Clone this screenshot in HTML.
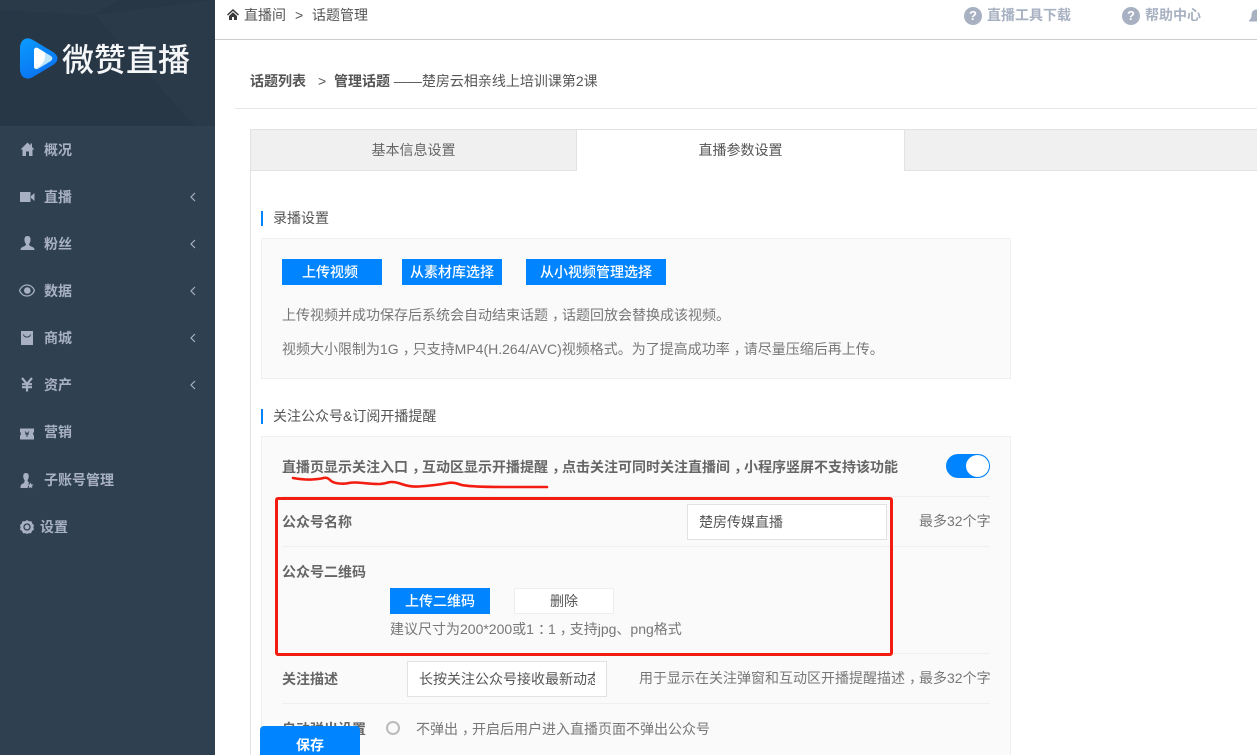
<!DOCTYPE html>
<html lang="zh">
<head>
<meta charset="utf-8">
<title>话题管理</title>
<style>
html,body{margin:0;padding:0;width:1257px;height:755px;overflow:hidden;background:#fff}
body{position:relative;font-family:"Liberation Sans","Noto Sans CJK SC",sans-serif;font-size:14px;color:#777}
.a,.t{position:absolute;box-sizing:border-box}
.t{white-space:nowrap;line-height:20px;height:20px}
.b{font-weight:700}
.nav{color:#a7b1c2;font-weight:700;left:44px}
.chev{position:absolute;left:190px}
.ico{position:absolute}
.btn{position:absolute;box-sizing:border-box;background:#0084ff;color:#fff;text-align:center;height:26px;line-height:26px;font-weight:500}
.line{position:absolute;left:282px;width:708px;height:1px;background:#f0f0f0}
.input{position:absolute;box-sizing:border-box;width:200px;height:36px;background:#fff;border:1px solid #e2e2e2;line-height:34px;padding-left:11px;color:#555;overflow:hidden;white-space:nowrap}
.c{position:relative;left:4px}
</style>
</head>
<body>
<!-- sidebar -->
<div class="a" style="left:0;top:0;width:215px;height:755px;background:#2f4050"></div>
<svg class="ico" style="left:0;top:0" width="215" height="126" viewBox="0 0 215 126">
<rect width="215" height="126" fill="#283746"/>
<polygon points="95,15 215,0 215,126 195,126" fill="#2a3a49"/>
<polygon points="0,0 120,0 92,15 0,10" fill="#2a3a49"/>
</svg>
<svg class="ico" style="left:20px;top:38px" width="38" height="41" viewBox="0 0 38 41">
<defs><linearGradient id="g" x1="0" y1="0" x2="0.5" y2="1"><stop offset="0" stop-color="#0a9cff"/><stop offset="1" stop-color="#0a72f0"/></linearGradient></defs>
<path d="M0 10C0 2 6-2 13 2L33 14C39 18 39 23 33 27L13 39C6 43 0 39 0 31Z" fill="url(#g)"/>
<path d="M14 12.5C14 10 16 9 18.500 10.500L30.500 17.800C33 19.300 33 21.700 30.500 23.200L18.500 30.500C16 32 14 31 14 28.500Z" fill="#bfe5fb"/>
<path d="M14 12.500C14 10 16 9 18.500 10.500L24.500 14.200C26.500 20 23.500 27 15.500 30.500C14.500 30 14 29.500 14 28.500Z" fill="#fff"/>
</svg>
<div class="t" style="left:62px;top:40px;height:40px;line-height:40px;font-size:32px;color:#f4f6f8;font-weight:500">微赞直播</div>

<svg class="ico" style="left:20px;top:142px" width="15" height="15" viewBox="0 0 15 15"><path d="M7.5 0.500L0.500 7.500H2.500V14H6V9.500H9V14H12.500V7.500H14.500L12 5V1.500H10.500V3.500Z" fill="#a7b1c2"/></svg>
<div class="t nav" style="top:140px">概况</div>
<svg class="ico" style="left:20px;top:191px" width="15" height="12" viewBox="0 0 15 12"><path d="M0 1H10.500V11H0ZM11 5L14.500 2V10L11 7Z" fill="#a7b1c2"/></svg>
<div class="t nav" style="top:187px">直播</div>
<svg class="ico" style="left:20px;top:236px" width="15" height="15" viewBox="0 0 15 15"><path d="M7.500 0C10 0 10.800 2 10.500 4.500C10.300 6.300 9.500 7.500 9 8.200C9 9.600 10.500 10 12.500 11C14 11.700 14.500 12.500 14.500 14H0.500C0.500 12.500 1 11.700 2.500 11C4.500 10 6 9.600 6 8.200C5.500 7.500 4.700 6.300 4.500 4.500C4.200 2 5 0 7.500 0Z" fill="#a7b1c2"/></svg>
<div class="t nav" style="top:234px">粉丝</div>
<svg class="ico" style="left:19px;top:284px" width="16" height="13" viewBox="0 0 16 13"><path d="M8 1C12 1 14.500 4 15.500 6.500C14.500 9 12 12 8 12C4 12 1.500 9 0.500 6.500C1.500 4 4 1 8 1Z" fill="none" stroke="#a7b1c2" stroke-width="1.300"/><circle cx="8.300" cy="6.500" r="3.300" fill="#a7b1c2"/></svg>
<div class="t nav" style="top:281px">数据</div>
<svg class="ico" style="left:21px;top:331px" width="12" height="14" viewBox="0 0 12 14"><path d="M0 0H12V14H0Z" fill="#a7b1c2"/><path d="M2.500 3.500C3 7 9 7 9.500 3.500" fill="none" stroke="#2f4050" stroke-width="1"/></svg>
<div class="t nav" style="top:328px">商城</div>
<svg class="ico" style="left:21px;top:377px" width="12" height="15" viewBox="0 0 12 15"><path d="M1 1L6 7L11 1M1 7.200H11M1 10.200H11M6 7V14.500" fill="none" stroke="#a7b1c2" stroke-width="2.200"/></svg>
<div class="t nav" style="top:375px">资产</div>
<svg class="ico" style="left:20px;top:428px" width="14" height="12" viewBox="0 0 14 12"><path d="M0 0.500H14V4C12.800 4.300 12.800 7.200 14 7.500V11.500H0V7.500C1.200 7.200 1.200 4.300 0 4Z" fill="#a7b1c2"/><path d="M5 3.500L7 6L9 3.500M5 6H9M7 6V9" fill="none" stroke="#2f4050" stroke-width="1"/></svg>
<div class="t nav" style="top:422px">营销</div>
<svg class="ico" style="left:20px;top:473px" width="14" height="16" viewBox="0 0 14 16"><path d="M6 0C8.200 0 9 1.800 8.700 4C8.500 5.500 8 6.500 7.500 7.200C7.500 8.300 8 8.800 9 9.300L7.500 15H0.500C0.500 12.500 1 11.500 2.500 10.800C4 10 4.800 9 4.600 7.200C4 6.500 3.500 5.500 3.300 4C3 1.800 3.800 0 6 0Z" fill="#a7b1c2"/><path d="M10.500 9.500L11.400 11.400L13.500 11.700L12 13.100L12.400 15.200L10.500 14.200L8.600 15.200L9 13.100L7.500 11.700L9.600 11.400Z" fill="#a7b1c2"/></svg>
<div class="t nav" style="top:470px">子账号管理</div>
<svg class="ico" style="left:20px;top:520px" width="14" height="14" viewBox="0 0 14 14"><path d="M7 0L9 1.200L11.500 1.200L12.300 3.500L14 5.200L13.400 7.500L14 9.500L12 11L11 13.200L8.700 13.200L7 14L5.200 13.200L3 13.200L2 11L0 9.500L0.600 7.500L0 5.200L1.700 3.500L2.500 1.200L5 1.200Z" fill="#a7b1c2"/><circle cx="7" cy="7" r="3" fill="none" stroke="#2f4050" stroke-width="1.300"/></svg>
<div class="t nav" style="top:517px;left:40px">设置</div>

<svg class="chev" style="top:192px" width="6" height="10" viewBox="0 0 6 10"><path d="M5 1L1 5L5 9" fill="none" stroke="#a7b1c2" stroke-width="1.200"/></svg>
<svg class="chev" style="top:239px" width="6" height="10" viewBox="0 0 6 10"><path d="M5 1L1 5L5 9" fill="none" stroke="#a7b1c2" stroke-width="1.200"/></svg>
<svg class="chev" style="top:286px" width="6" height="10" viewBox="0 0 6 10"><path d="M5 1L1 5L5 9" fill="none" stroke="#a7b1c2" stroke-width="1.200"/></svg>
<svg class="chev" style="top:333px" width="6" height="10" viewBox="0 0 6 10"><path d="M5 1L1 5L5 9" fill="none" stroke="#a7b1c2" stroke-width="1.200"/></svg>
<svg class="chev" style="top:380px" width="6" height="10" viewBox="0 0 6 10"><path d="M5 1L1 5L5 9" fill="none" stroke="#a7b1c2" stroke-width="1.200"/></svg>

<!-- top bar -->
<div class="a" style="left:215px;top:39px;width:1042px;height:1px;background:#ccc"></div>
<svg class="ico" style="left:227px;top:9px" width="12" height="11" viewBox="0 0 12 11"><path d="M6 0L0 5.500L1 6.500L6 2L11 6.500L12 5.500ZM2 7V11H5V8H7V11H10V7L6 3.200Z" fill="#3a3a3a"/></svg>
<div class="t" style="left:244px;top:5px;color:#555">直播间</div>
<div class="t" style="left:295px;top:5px;color:#555">&gt;</div>
<div class="t" style="left:312px;top:5px;color:#555">话题管理</div>
<div class="a" style="left:964px;top:7px;width:18px;height:18px;border-radius:50%;background:#a7b1c2;color:#fff;text-align:center;line-height:18px;font-size:13px;font-weight:700">?</div>
<div class="t b" style="left:987px;top:5px;color:#a7b1c2">直播工具下载</div>
<div class="a" style="left:1122px;top:7px;width:18px;height:18px;border-radius:50%;background:#a7b1c2;color:#fff;text-align:center;line-height:18px;font-size:13px;font-weight:700">?</div>
<div class="t b" style="left:1145px;top:5px;color:#a7b1c2">帮助中心</div>
<svg class="ico" style="left:1249px;top:9px" width="8" height="15" viewBox="0 0 8 15"><path d="M8 0.500C4 0.500 2.500 3 2.500 6.500C2.500 9 1.500 10 0 11.500V12.500H8Z" fill="#a7b1c2"/></svg>

<!-- breadcrumb -->
<div class="t b" style="left:250px;top:71px;color:#555">话题列表</div>
<div class="t" style="left:318px;top:71px;color:#555">&gt;</div>
<div class="t" style="left:334px;top:71px;color:#555"><span class="b">管理话题</span> ——楚房云相亲线上培训课第2课</div>
<div class="a" style="left:235px;top:108px;width:1022px;height:1px;background:#e7e7e7"></div>

<!-- tabs -->
<div class="a" style="left:250px;top:129px;width:1007px;height:1px;background:#e2e2e2"></div>
<div class="a" style="left:250px;top:130px;width:1px;height:625px;background:#e2e2e2"></div>
<div class="a" style="left:251px;top:130px;width:326px;height:41px;background:#f0f0f0;border-bottom:1px solid #e2e2e2;border-right:1px solid #e2e2e2;text-align:center;line-height:40px;color:#666">基本信息设置</div>
<div class="a" style="left:577px;top:130px;width:327px;height:41px;background:#fff;text-align:center;line-height:40px;color:#555">直播参数设置</div>
<div class="a" style="left:904px;top:130px;width:353px;height:41px;background:#f0f0f0;border-bottom:1px solid #e2e2e2;border-left:1px solid #e2e2e2"></div>

<!-- section 1 -->
<div class="a" style="left:261px;top:211px;width:2px;height:15px;background:#0084ff"></div>
<div class="t" style="left:273px;top:208px;color:#555">录播设置</div>
<div class="a" style="left:261px;top:238px;width:750px;height:141px;background:#fafafa;border:1px solid #f0f0f0"></div>
<div class="btn" style="left:282px;top:259px;width:100px;line-height:26px;padding-right:4px">上传视频</div>
<div class="btn" style="left:402px;top:259px;width:100px;line-height:27px">从素材库选择</div>
<div class="btn" style="left:526px;top:259px;width:140px;line-height:27px">从小视频管理选择</div>
<div class="t" style="left:282px;top:305px">上传视频并成功保存后系统会自动结束话题<span class="c">，</span>话题回放会替换成该视频。</div>
<div class="t" style="left:282px;top:339px">视频大小限制为1G<span class="c">，</span>只支持MP4(H.264/AVC)视频格式。为了提高成功率<span class="c">，</span>请尽量压缩后再上传。</div>

<!-- section 2 -->
<div class="a" style="left:261px;top:409px;width:2px;height:15px;background:#0084ff"></div>
<div class="t" style="left:273px;top:406px;color:#555">关注公众号&amp;订阅开播提醒</div>
<div class="a" style="left:261px;top:436px;width:750px;height:330px;background:#fafafa;border:1px solid #f0f0f0"></div>
<div class="t b" style="left:282px;top:457px;color:#666">直播页显示关注入口<span class="c">，</span>互动区显示开播提醒<span class="c">，</span>点击关注可同时关注直播间<span class="c">，</span>小程序竖屏不支持该功能</div>
<div class="a" style="left:946px;top:454px;width:44px;height:24px;border-radius:12px;background:#0084ff"></div>
<div class="a" style="left:966px;top:455px;width:23px;height:22px;border-radius:50%;background:#fff"></div>
<div class="line" style="top:496px"></div>
<div class="t b" style="left:282px;top:512px;color:#666">公众号名称</div>
<div class="input" style="left:687px;top:504px">楚房传媒直播</div>
<div class="t" style="left:919px;top:511px;width:71px;text-align:right">最多32个字</div>
<div class="line" style="top:546px"></div>
<div class="t b" style="left:282px;top:562px;color:#666">公众号二维码</div>
<div class="btn" style="left:390px;top:588px;width:100px;line-height:27px">上传二维码</div>
<div class="btn" style="left:514px;top:588px;width:100px;background:#fff;border:1px solid #eee;color:#555;line-height:25px;font-weight:400">删除</div>
<div class="t" style="left:390px;top:619px">建议尺寸为200*200或1<span class="c">：</span>1<span class="c">，</span>支持jpg、png格式</div>
<div class="line" style="top:653px"></div>
<div class="t b" style="left:282px;top:669px;color:#666">关注描述</div>
<div class="input" style="left:407px;top:661px"><div style="width:176px;overflow:hidden">长按关注公众号接收最新动态</div></div>
<div class="t" style="left:639px;top:668px;width:351px;text-align:right">用于显示在关注弹窗和互动区开播提醒描述<span class="c">，</span>最多32个字</div>
<div class="line" style="top:703px"></div>
<div class="t b" style="left:282px;top:719px;color:#666">自动弹出设置</div>
<div class="a" style="left:386px;top:721px;width:14px;height:14px;border-radius:50%;border:2px solid #bbb;background:#fafafa"></div>
<div class="t" style="left:416px;top:719px">不弹出<span class="c">，</span>开启后用户进入直播页面不弹出公众号</div>

<!-- annotations -->
<div class="a" style="left:275px;top:497px;width:618px;height:159px;border:3px solid #f21c10;border-radius:3px"></div>
<svg class="ico" style="left:285px;top:470px" width="270" height="25" viewBox="285 470 270 25">
<path d="M293 478Q305 480 312 479.500Q320 479 323.500 478Q327 477 330 480Q333 483 339 483.500Q345 484 349 483Q353 482 363 483Q373 484 378 484Q383 484 388 482.500Q393 481 401.500 484Q410 487 418.500 486.500Q427 486 435 485Q443 484 448 483Q453 482 460 484.500Q467 487 507 487L547 487" fill="none" stroke="#f21c10" stroke-width="2.600" stroke-linecap="round" stroke-linejoin="round"/>
</svg>
<div class="a" style="left:260px;top:726px;width:100px;height:29px;background:#0084ff;border-radius:4px 4px 0 0;color:#fff;font-weight:700;text-align:center;line-height:38px">保存</div>
</body>
</html>
